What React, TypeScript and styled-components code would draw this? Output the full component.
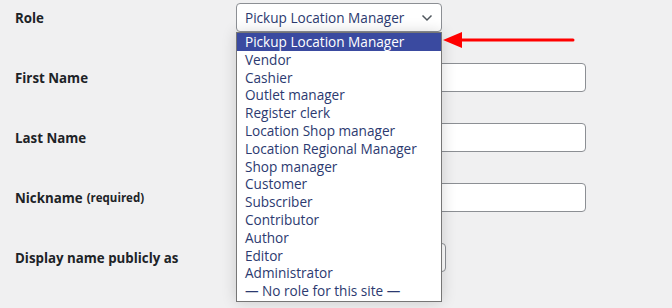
import React from "react";
import styled, { createGlobalStyle } from "styled-components";

const Global = createGlobalStyle`
  html, body { margin: 0; padding: 0; background: #f0f0f1; }
  body { font-family: "Open Sans", "Noto Sans", sans-serif; color: #1d2327; overflow: hidden; }
`;

const Page = styled.div`
  width: 672px;
  height: 308px;
  overflow: hidden;
  padding-left: 15px;
  box-sizing: border-box;
`;

const Table = styled.div`
  display: grid;
  grid-template-columns: 221px 1fr;
  grid-auto-rows: 60px;
`;

const Label = styled.div`
  height: 35px;
  display: flex;
  align-items: center;
  font-size: 13.3px;
  font-weight: 700;
  color: #1d2327;
  white-space: nowrap;
`;

const Small = styled.span`
  font-size: 11.5px;
  margin-left: 4px;
`;

const Cell = styled.div`
  padding-top: 3px;
  position: relative;
`;

const Input = styled.div`
  width: 350px;
  height: 29px;
  box-sizing: border-box;
  background: #fff;
  border: 1px solid #8c8f94;
  border-radius: 4px;
`;

const Select = styled.div<{ $w: number }>`
  width: ${(p) => p.$w}px;
  height: 29px;
  box-sizing: border-box;
  background: #fff;
  border: 1px solid #8c8f94;
  border-radius: 4px;
  display: flex;
  align-items: center;
  justify-content: space-between;
  padding: 0 8px 0 8px;
  font-size: 13.6px;
  color: #2c3a70;
`;

const List = styled.div`
  position: absolute;
  left: 0;
  top: 32px;
  width: 206px;
  box-sizing: border-box;
  background: #fff;
  border: 1px solid #767676;
  box-shadow: 0 0 14px rgba(0, 0, 0, 0.16);
  z-index: 5;
  padding-bottom: 1px;
`;

const Item = styled.div<{ $active?: boolean }>`
  height: 17.8px;
  line-height: 17.8px;
  padding-left: 8px;
  font-size: 13.6px;
  white-space: nowrap;
  color: ${(p) => (p.$active ? "#fff" : "#2c3a70")};
  background: ${(p) => (p.$active ? "#3a4aa0" : "transparent")};
`;

const Arrow = styled.svg`
  position: absolute;
  left: 207px;
  top: 31px;
  z-index: 6;
`;

const Heading = styled.h2`
  grid-column: 1 / -1;
  margin: 9px 0 0 0;
  font-size: 21px;
  font-weight: 600;
  color: #1d2327;
`;

const roles = [
  "Pickup Location Manager",
  "Vendor",
  "Cashier",
  "Outlet manager",
  "Register clerk",
  "Location Shop manager",
  "Location Regional Manager",
  "Shop manager",
  "Customer",
  "Subscriber",
  "Contributor",
  "Author",
  "Editor",
  "Administrator",
  "— No role for this site —",
];

const Chevron = () => (
  <svg width="12" height="8" viewBox="0 0 12 8">
    <path d="M1.5 1.5 L6 6 L10.5 1.5" fill="none" stroke="#50575e" strokeWidth="1.5" />
  </svg>
);

export default function App() {
  return (
    <Page>
      <Global />
      <Table>
        <Label>Role</Label>
        <Cell>
          <Select $w={206}>
            <span>Pickup Location Manager</span>
            <Chevron />
          </Select>
          <List>
            {roles.map((r, i) => (
              <Item key={r} $active={i === 0}>
                {r}
              </Item>
            ))}
          </List>
          <Arrow width="140" height="20" viewBox="0 0 140 20">
            <polygon points="0,9 19,1 19,17" fill="#f00" />
            <line x1="17" y1="9" x2="130" y2="9" stroke="#f00" strokeWidth="3" strokeLinecap="round" />
          </Arrow>
        </Cell>

        <Label>First Name</Label>
        <Cell>
          <Input />
        </Cell>

        <Label>Last Name</Label>
        <Cell>
          <Input />
        </Cell>

        <Label>
          Nickname<Small>(required)</Small>
        </Label>
        <Cell>
          <Input />
        </Cell>

        <Label>Display name publicly as</Label>
        <Cell>
          <Select $w={210} />
        </Cell>

        <Heading>Contact Info</Heading>
      </Table>
    </Page>
  );
}
